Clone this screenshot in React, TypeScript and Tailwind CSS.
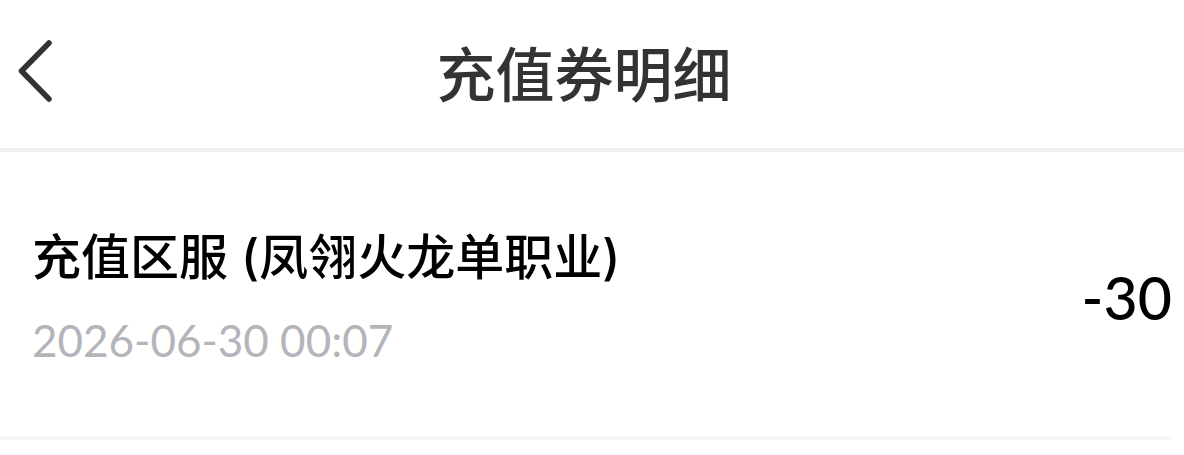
import { useState } from 'react';

interface VoucherRecord {
  id: number;
  title: string;
  time: string;
  amount: number;
}

const initialRecords: VoucherRecord[] = [
  { id: 1, title: '充值区服 (凤翎火龙单职业)', time: '2026-06-30 00:07', amount: -30 }
];

function Header() {
  return (
    <header className="relative flex items-center justify-center border-b-4 border-[#efefef] pt-7 pr-4 pb-8">
      <button
        type="button"
        aria-label="返回"
        onClick={() => window.history.back()}
        className="absolute left-4 top-9"
      >
        <svg width="40" height="70" viewBox="0 0 40 70" fill="none" aria-hidden="true">
          <path
            d="M33 7 L5.500 35 L33 63"
            stroke="#333333"
            strokeWidth="5.500"
            strokeLinecap="round"
            strokeLinejoin="round"
          />
        </svg>
      </button>
      <h1 className="text-[59px] leading-[88px] font-medium text-[#333333]">充值券明细</h1>
    </header>
  );
}

function RecordRow({ record }: { record: VoucherRecord }) {
  return (
    <li className="mr-3 flex items-center justify-between border-b-4 border-[#f5f6f9] pt-[68px] pb-[60px] pl-8">
      <div>
        <p className="font-[Inter,'Noto_Sans_CJK_SC',sans-serif] text-[49px] leading-[76px] font-medium text-black">
          {record.title}
        </p>
        <time className="block pt-2 font-[Lato,sans-serif] text-[44px] leading-[72px] text-[#b4b4bb]">
          {record.time}
        </time>
      </div>
      <span className="font-[Lato,sans-serif] text-[59px] leading-[72px] font-medium text-black">
        {record.amount}
      </span>
    </li>
  );
}

export default function App() {
  const [records] = useState(initialRecords);

  return (
    <main className="min-h-screen bg-white font-['Noto_Sans_CJK_SC',sans-serif]">
      <Header />
      <ul>
        {records.map((record) => (
          <RecordRow key={record.id} record={record} />
        ))}
      </ul>
    </main>
  );
}
